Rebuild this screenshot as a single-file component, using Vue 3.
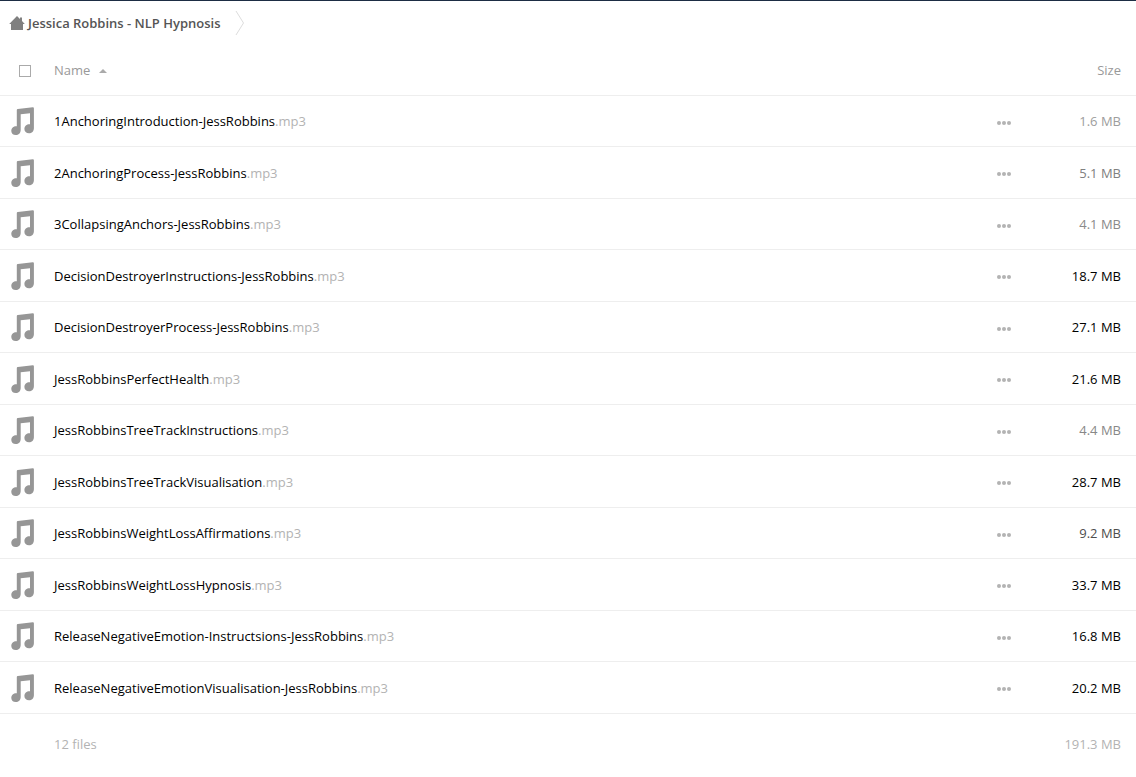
<template>
  <div class="files-app">
    <nav class="breadcrumb" aria-label="Breadcrumb">
      <a href="#" class="crumb">
        <svg class="home" width="16" height="16" viewBox="0 0 16 16" aria-hidden="true">
          <path d="M8 1 L11 4 V2.5 H13 V6 L15.8 9 H14 V15 H2 V9 H0.2 Z" />
        </svg>
        <span>{{ folder }}</span>
      </a>
      <svg class="separator" width="10" height="26" viewBox="0 0 10 26" aria-hidden="true">
        <path d="M1 1 L8.5 13 L1 25" />
      </svg>
    </nav>

    <table class="filelist">
      <thead>
        <tr>
          <th class="select">
            <input type="checkbox" v-model="allSelected" aria-label="Select all" />
          </th>
          <th class="name">
            <button type="button" class="sort" @click="toggleSort">
              <span>Name</span>
              <span class="triangle" :class="{ down: !ascending }"></span>
            </button>
          </th>
          <th class="actions"></th>
          <th class="size">
            <button type="button" class="sort">Size</button>
          </th>
        </tr>
      </thead>
      <tbody>
        <tr v-for="file in sortedFiles" :key="file.name">
          <td class="select">
            <svg class="note" width="24" height="30" viewBox="0 0 24 30" aria-hidden="true">
              <path d="M5.8 4 Q5.8 3 6.8 2.9 L21.8 1.2 Q22.9 1.1 22.9 2.2 V22.2 C22.9 25.2 20.8 27.2 18 27.2 C15.2 27.2 13.4 25.4 13.4 23 C13.4 20 16 18 19 18.3 V7.2 L9.7 8.3 V24 C9.7 27 7.6 29 4.8 29 C2 29 0.3 27.2 0.3 24.9 C0.3 22 2.8 20 5.8 20.3 Z" />
            </svg>
          </td>
          <td class="name">
            <a href="#">{{ file.name }}<span class="extension">.mp3</span></a>
          </td>
          <td class="actions">
            <button type="button" class="more" :aria-label="'Actions for ' + file.name">
              <svg width="14" height="4" viewBox="0 0 14 4" aria-hidden="true">
                <circle cx="2" cy="2" r="2" />
                <circle cx="7" cy="2" r="2" />
                <circle cx="12" cy="2" r="2" />
              </svg>
            </button>
          </td>
          <td class="size" :style="{ color: file.color }">{{ file.size }} MB</td>
        </tr>
      </tbody>
      <tfoot>
        <tr>
          <td class="select"></td>
          <td class="name">{{ files.length }} files</td>
          <td class="actions"></td>
          <td class="size">191.3 MB</td>
        </tr>
      </tfoot>
    </table>
  </div>
</template>

<script setup>
import { computed, ref } from 'vue';

const folder = 'Jessica Robbins - NLP Hypnosis';
const allSelected = ref(false);
const ascending = ref(true);

// bigger files get a darker size label
const files = ref([
  { name: '1AnchoringIntroduction-JessRobbins', size: '1.6', color: '#9d9d9d' },
  { name: '2AnchoringProcess-JessRobbins', size: '5.1', color: '#808080' },
  { name: '3CollapsingAnchors-JessRobbins', size: '4.1', color: '#8a8a8a' },
  { name: 'DecisionDestroyerInstructions-JessRobbins', size: '18.7', color: '#000' },
  { name: 'DecisionDestroyerProcess-JessRobbins', size: '27.1', color: '#000' },
  { name: 'JessRobbinsPerfectHealth', size: '21.6', color: '#000' },
  { name: 'JessRobbinsTreeTrackInstructions', size: '4.4', color: '#888' },
  { name: 'JessRobbinsTreeTrackVisualisation', size: '28.7', color: '#000' },
  { name: 'JessRobbinsWeightLossAffirmations', size: '9.2', color: '#4d4d4d' },
  { name: 'JessRobbinsWeightLossHypnosis', size: '33.7', color: '#000' },
  { name: 'ReleaseNegativeEmotion-Instructsions-JessRobbins', size: '16.8', color: '#000' },
  { name: 'ReleaseNegativeEmotionVisualisation-JessRobbins', size: '20.2', color: '#000' },
]);

const sortedFiles = computed(() => (ascending.value ? files.value : [...files.value].reverse()));

const toggleSort = () => {
  ascending.value = !ascending.value;
};
</script>

<style>
body {
  margin: 0;
  background: #fff;
}
</style>

<style scoped>
.files-app {
  border-top: 1px solid #1d2d44;
  font-family: 'Open Sans', sans-serif;
  font-size: 13px;
  line-height: 20px;
  color: #000;
}
a {
  color: inherit;
  text-decoration: none;
}
button {
  padding: 0;
  border: 0;
  background: none;
  font: inherit;
  color: inherit;
  cursor: pointer;
}
.breadcrumb {
  display: flex;
  align-items: center;
  gap: 14px;
  height: 44px;
  padding-left: 9px;
}
.crumb {
  display: flex;
  align-items: center;
  gap: 3px;
  font-weight: 600;
  color: #555;
}
.home {
  fill: #808080;
}
.separator {
  fill: none;
  stroke: #ddd;
}
.filelist {
  width: 100%;
  border-spacing: 0;
  table-layout: fixed;
}
th,
td {
  box-sizing: border-box;
  height: 51px;
  padding: 0;
  border-bottom: 1px solid #eee;
  font-weight: 400;
  text-align: left;
  vertical-align: middle;
}
tbody tr:nth-child(even) td {
  height: 52px;
}
th {
  color: #999;
}
.select {
  width: 54px;
}
.select input {
  appearance: none;
  display: block;
  width: 12px;
  height: 12px;
  margin: 2px 0 0 19px;
  border: 1px solid #aaa;
}
.select input:checked {
  background: #aaa;
}
.sort {
  display: inline-flex;
  align-items: center;
  gap: 9px;
}
.triangle {
  margin-top: 2px;
  border: 4px solid transparent;
  border-top-width: 0;
  border-bottom-color: #aaa;
}
.triangle.down {
  transform: rotate(180deg);
}
.note {
  display: block;
  margin-left: 11px;
  fill: #969696;
}
.extension {
  color: #b3b3b3;
}
.actions {
  width: 30px;
}
.more {
  display: flex;
  align-items: center;
  height: 20px;
  padding-top: 3px;
  fill: #b3b3b3;
}
th.size,
td.size {
  width: 109px;
  padding-right: 15px;
  text-align: right;
}
tfoot td {
  height: 60px;
  border-bottom: 0;
  color: #b3b3b3;
}
</style>
